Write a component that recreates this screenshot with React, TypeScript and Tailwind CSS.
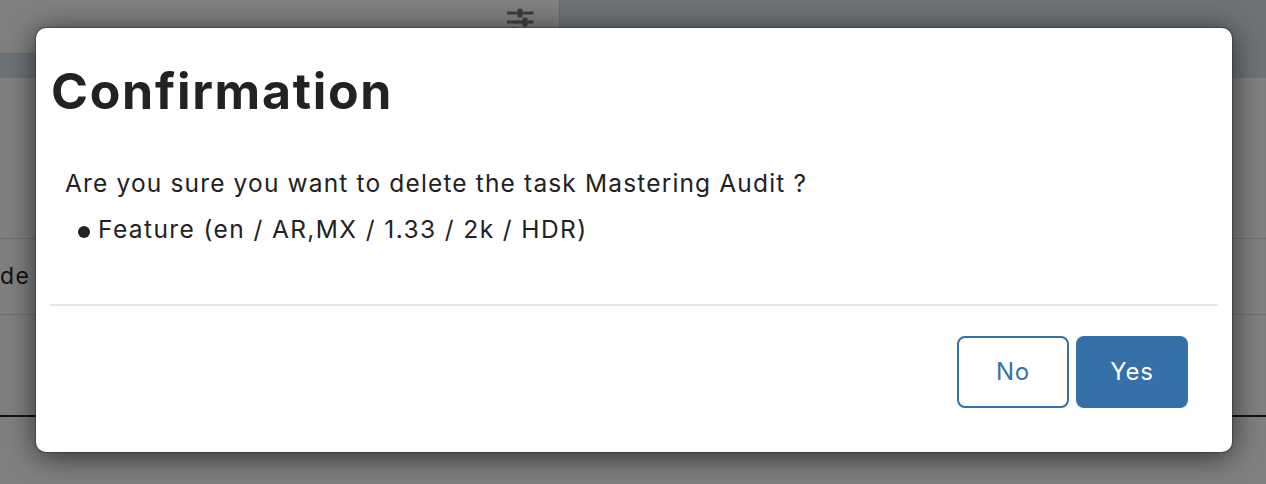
import React from 'react';

const FONT = "font-['Inter','Liberation_Sans',sans-serif]";

const SlidersGlyph = () => (
  <svg width="28" height="28" viewBox="0 0 28 28" fill="none">
    <path d="M0 8h26.500M0 17h26.500M0 26h8" stroke="#3f3f3f" strokeWidth="3" />
    <rect x="10.500" y="3.500" width="5" height="9" rx="1.500" fill="#3f3f3f" />
    <rect x="15.500" y="12.500" width="5" height="9" rx="1.500" fill="#3f3f3f" />
    <rect x="5" y="22" width="5" height="6" rx="1.500" fill="#3f3f3f" />
  </svg>
);

const Backdrop = () => (
  <div className="h-[484px] w-full overflow-hidden bg-[#808080]">
    <div className="flex h-[78px]">
      <div className="w-[560px] shrink-0">
        <div className="flex h-[54px] justify-end border-b border-r border-[#6a6a6a] pr-[24px] pt-[5px]">
          <SlidersGlyph />
        </div>
        <div className="h-[24px] bg-[#6e7378]" />
      </div>
      <div className="flex-1 bg-[#6e7378]" />
    </div>
    <div className="h-[160px]" />
    <div className="flex h-[77px] items-center border-y border-[#707070] text-[23px] leading-none tracking-[1.500px] text-[#111]">
      <span>de</span>
    </div>
    <div className="h-[102px] border-b-2 border-[#111]" />
  </div>
);

const ConfirmDialog = () => (
  <div className="absolute left-[36px] top-[28px] flex h-[424px] w-[1196px] flex-col rounded-[10px] bg-white px-[14px] shadow-[0_0_0_1px_rgba(50,50,50,0.5),0_4px_30px_rgba(0,0,0,0.65)]">
    <h1 className="ml-[1px] mt-[30px] text-[50px] font-bold leading-[66px] tracking-[1.700px] text-[#222]">Confirmation</h1>
    <div className="mt-[36px] pl-[15px] text-[24.500px] font-[380] leading-[46px] text-[#222]">
      <p className="tracking-[1.150px]">Are you sure you want to delete the task Mastering Audit ?</p>
      <div className="flex items-center pl-[13px] tracking-[1.400px]">
        <span className="mr-[8px] mt-[5px] h-[12px] w-[12px] shrink-0 rounded-full bg-[#222]" />
        <span>Feature (en / AR,MX / 1.33 / 2k / HDR)</span>
      </div>
    </div>
    <div className="mt-[52px] border-t-2 border-[#e6e6e6]" />
    <div className="mt-[30px] flex justify-end gap-[7px] pr-[30px] text-[24px] font-normal leading-none tracking-[0.8px]">
      <button className="h-[72px] w-[112px] rounded-[8px] border-2 border-[#3571a8] bg-white text-[#3571a8]">No</button>
      <button className="h-[72px] w-[112px] rounded-[8px] bg-[#3571a8] text-white">Yes</button>
    </div>
  </div>
);

export default function App() {
  return (
    <div className={`relative h-[484px] w-full overflow-hidden ${FONT}`}>
      <Backdrop />
      <ConfirmDialog />
    </div>
  );
}
